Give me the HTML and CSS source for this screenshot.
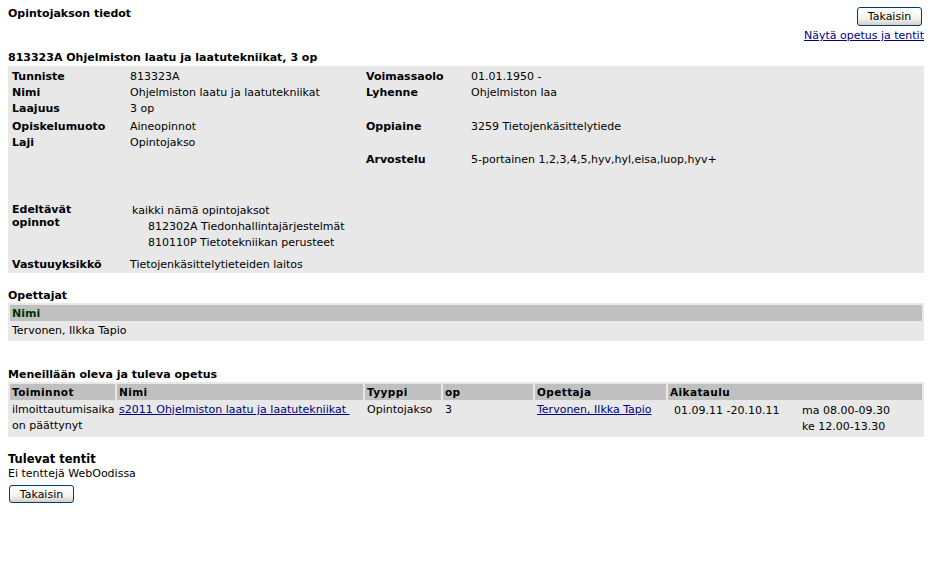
FILE: index.html
```html
<!DOCTYPE html>
<html lang="fi">
<head>
<meta charset="utf-8">
<title>Opintojakson tiedot</title>
<link rel="stylesheet" href="styles.css">
</head>
<body>
<div class="page">
  <div class="topbar">
    <h1 class="title">Opintojakson tiedot</h1>
    <div class="actions">
      <button class="btn" type="button">Takaisin</button>
      <a class="link" href="#">Näytä opetus ja tentit</a>
    </div>
  </div>

  <h2 class="course">813323A Ohjelmiston laatu ja laatutekniikat, 3 op</h2>

  <div class="info">
    <div class="row r1">
      <div class="lbl">Tunniste</div><div class="val">813323A</div>
      <div class="lbl">Voimassaolo</div><div class="val">01.01.1950 -</div>
    </div>
    <div class="row r2">
      <div class="lbl">Nimi</div><div class="val">Ohjelmiston laatu ja laatutekniikat</div>
      <div class="lbl">Lyhenne</div><div class="val">Ohjelmiston laa</div>
    </div>
    <div class="row r3">
      <div class="lbl">Laajuus</div><div class="val">3 op</div>
      <div class="lbl"></div><div class="val"></div>
    </div>
    <div class="row r4">
      <div class="lbl">Opiskelumuoto</div><div class="val">Aineopinnot</div>
      <div class="lbl">Oppiaine</div><div class="val">3259 Tietojenkäsittelytiede</div>
    </div>
    <div class="row r5">
      <div class="lbl">Laji</div><div class="val">Opintojakso</div>
      <div class="lbl"></div><div class="val"></div>
    </div>
    <div class="row r6">
      <div class="lbl"></div><div class="val"></div>
      <div class="lbl">Arvostelu</div><div class="val">5-portainen 1,2,3,4,5,hyv,hyl,eisa,luop,hyv+</div>
    </div>
    <div class="row r7">
      <div class="lbl lbl-multi">Edeltävät<br>opinnot</div>
      <div class="val prereq">
        <div class="pr-head">kaikki nämä opintojaksot</div>
        <div class="pr-item">812302A Tiedonhallintajärjestelmät</div>
        <div class="pr-item">810110P Tietotekniikan perusteet</div>
      </div>
    </div>
    <div class="row r8">
      <div class="lbl">Vastuuyksikkö</div><div class="val">Tietojenkäsittelytieteiden laitos</div>
    </div>
  </div>

  <h3 class="section s-teachers">Opettajat</h3>
  <table class="grid teachers">
    <thead><tr><th class="th-big">Nimi</th></tr></thead>
    <tbody><tr><td>Tervonen, Ilkka Tapio</td></tr></tbody>
  </table>

  <h3 class="section s-teaching">Meneillään oleva ja tuleva opetus</h3>
  <table class="grid teaching">
    <colgroup>
      <col class="c1"><col class="c2"><col class="c3"><col class="c4"><col class="c5"><col class="c6">
    </colgroup>
    <thead>
      <tr><th>Toiminnot</th><th>Nimi</th><th>Tyyppi</th><th>op</th><th>Opettaja</th><th>Aikataulu</th></tr>
    </thead>
    <tbody>
      <tr>
        <td>ilmoittautumisaika on päättynyt</td>
        <td><a class="link" href="#">s2011 Ohjelmiston laatu ja laatutekniikat&nbsp;</a></td>
        <td>Opintojakso</td>
        <td>3</td>
        <td><a class="link" href="#">Tervonen, Ilkka Tapio</a></td>
        <td>
          <div class="sched">
            <span class="dates">01.09.11 -20.10.11</span>
            <span class="times">ma 08.00-09.30<br>ke 12.00-13.30</span>
          </div>
        </td>
      </tr>
    </tbody>
  </table>

  <h3 class="section s-exams">Tulevat tentit</h3>
  <p class="noexams">Ei tenttejä WebOodissa</p>
  <button class="btn btn-bottom" type="button">Takaisin</button>
</div>
</body>
</html>
```

FILE: styles.css
```css
html, body {
  margin: 0;
  padding: 0;
  background: #fff;
}
body {
  font-family: "DejaVu Sans", Verdana, sans-serif;
  font-size: 11px;
  color: #000;
}
.page {
  padding: 6px 6px 0 8px;
}
.topbar {
  display: flex;
  justify-content: space-between;
  align-items: flex-start;
}
.title {
  margin: 1px 0 0 0;
  font-size: 11px;
  font-weight: bold;
  line-height: 14px;
}
.actions {
  display: flex;
  flex-direction: column;
  align-items: flex-end;
  padding-top: 1px;
}
.link {
  color: #000080;
  text-decoration: underline;
}
.actions .link {
  margin-top: 3px;
  line-height: 14px;
}
.btn {
  font-family: "DejaVu Sans", Verdana, sans-serif;
  font-size: 11px;
  color: #000;
  height: 19px;
  width: 65px;
  padding: 0;
  border: 1px solid #003c74;
  border-radius: 3px;
  background: linear-gradient(#ffffff, #f4f3ee 60%, #d6d0c5);
  margin-right: 2px;
}
.btn-bottom {
  margin-left: 1px;
  height: 18px;
}
.course {
  margin: 8px 0 0 0;
  font-size: 11px;
  font-weight: bold;
  line-height: 14px;
}
.info {
  background: #e8e8e8;
  margin-top: 1px;
  padding: 3px 0 0 4px;
  height: 207px;
  box-sizing: border-box;
}
.row {
  display: grid;
  grid-template-columns: 118px 236px 105px 1fr;
  line-height: 16px;
}
.lbl {
  font-weight: bold;
}
.r4 { margin-top: 2px; }
.r6 { margin-top: 1px; }
.r7 {
  margin-top: 35px;
  grid-template-columns: 120px 1fr;
}
.lbl-multi {
  line-height: 13px;
}
.pr-item {
  padding-left: 16px;
}
.r8 { margin-top: 6px; }

.section {
  margin: 0;
  font-size: 11px;
  font-weight: bold;
  line-height: 14px;
}
.s-teachers { margin-top: 16px; }
.s-teaching { margin-top: 27px; }
.s-exams { margin-top: 15px; font-size: 11.5px; }

.grid {
  width: 100%;
  border-collapse: separate;
  border-spacing: 2px;
  background: #e8e8e8;
  margin-top: 0;
}
.grid th {
  background: #c0c0c0;
  text-align: left;
  padding: 0 2px;
  height: 16px;
  font-size: 10.5px;
  font-weight: bold;
  letter-spacing: 0.4px;
  vertical-align: middle;
}
.grid th.th-big {
  font-size: 11px;
  letter-spacing: 0;
  color: #003300;
}
.grid td {
  padding: 0 2px;
  vertical-align: top;
  line-height: 16px;
}
.teachers td {
  height: 16px;
}
.teaching {
  table-layout: fixed;
}
.teaching td {
  height: 30px;
}
.c1 { width: 105px; }
.c2 { width: 246px; }
.c3 { width: 76px; }
.c4 { width: 90px; }
.c5 { width: 131px; }
.sched {
  display: flex;
  padding: 1px 0 0 4px;
}
.dates {
  width: 128px;
}
.noexams {
  margin: 0 0 3px 0;
  line-height: 16px;
}
```
